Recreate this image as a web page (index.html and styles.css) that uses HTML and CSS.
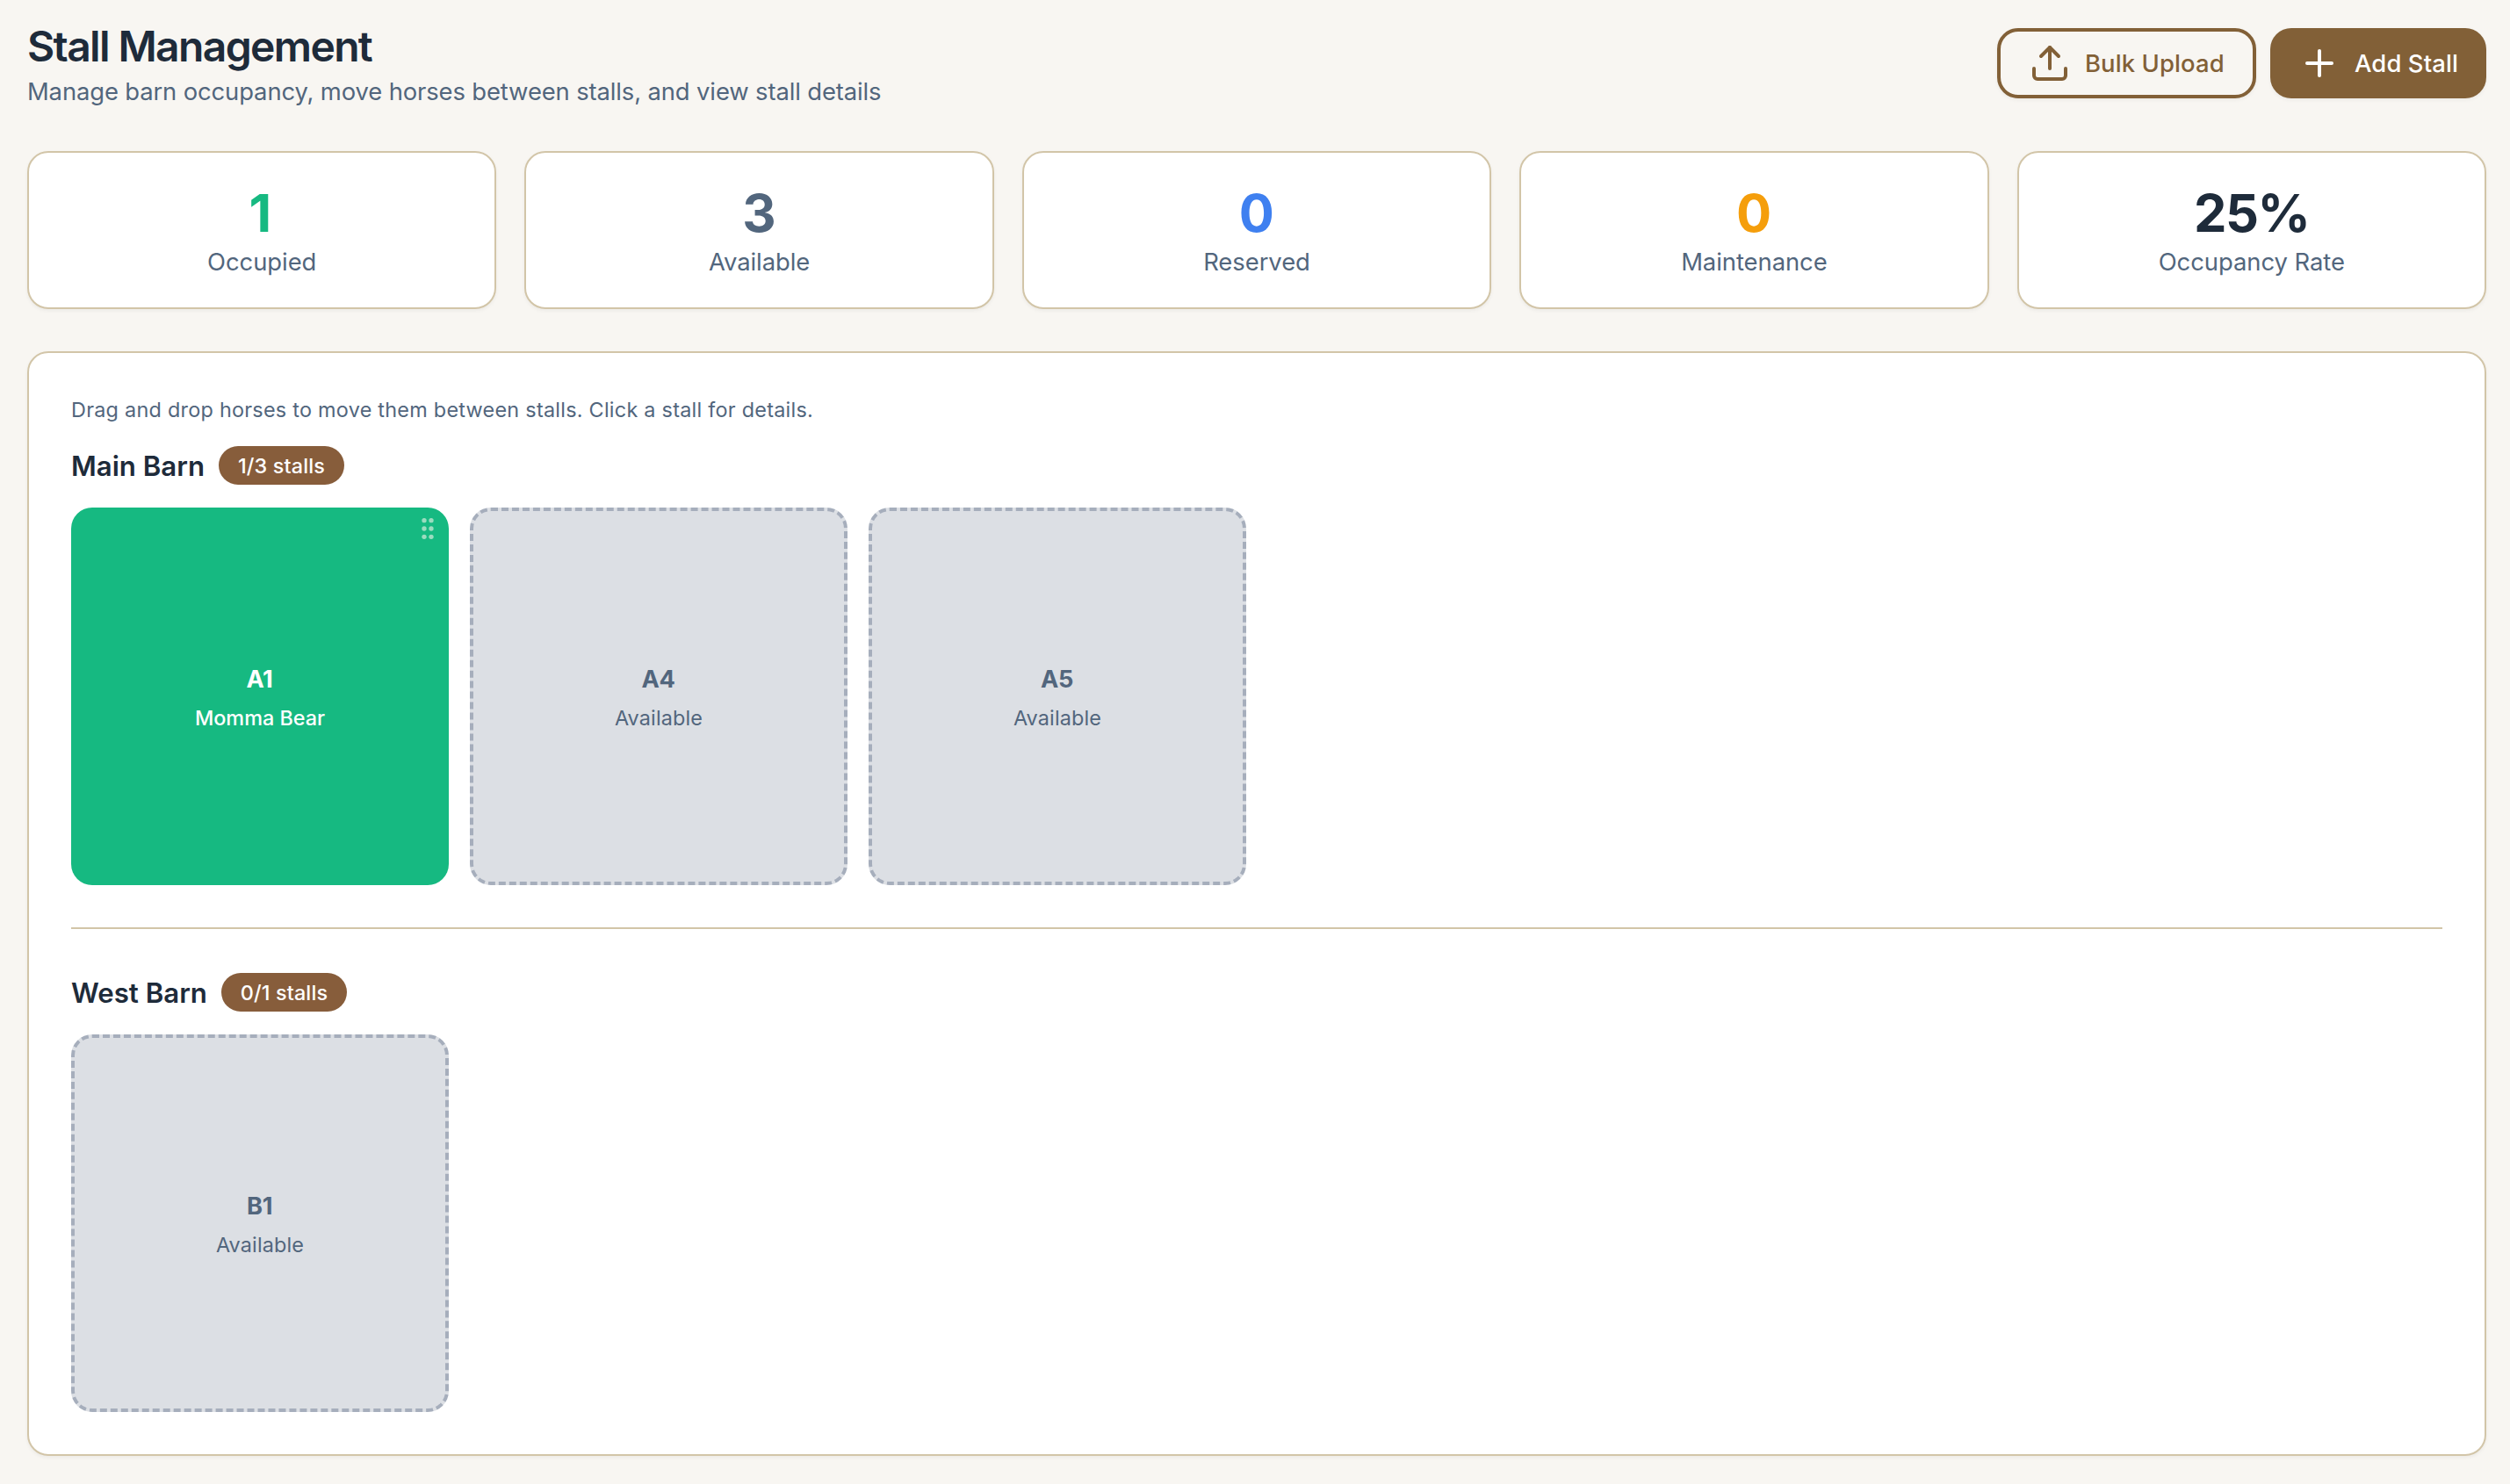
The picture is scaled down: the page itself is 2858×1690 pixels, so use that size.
FILE: index.html
```
<!DOCTYPE html>
<html lang="en">
<head>
<meta charset="utf-8">
<title>Stall Management</title>
<link rel="stylesheet" href="styles.css">
</head>
<body>
<main class="page">
  <header class="page-header">
    <div class="heading">
      <h1 class="title">Stall Management</h1>
      <p class="subtitle">Manage barn occupancy, move horses between stalls, and view stall details</p>
    </div>
    <div class="actions">
      <button class="btn btn-outline" type="button">
        <svg class="btn-icon" viewBox="0 0 24 24" aria-hidden="true"><path d="M21 15v4a2 2 0 0 1-2 2H5a2 2 0 0 1-2-2v-4"/><path d="M17 8l-5-5-5 5"/><path d="M12 3v12"/></svg>
        <span>Bulk Upload</span>
      </button>
      <button class="btn btn-solid" type="button">
        <svg class="btn-icon" viewBox="0 0 24 24" aria-hidden="true"><path d="M5 12h14"/><path d="M12 5v14"/></svg>
        <span>Add Stall</span>
      </button>
    </div>
  </header>

  <section class="stats">
    <div class="stat"><div class="stat-value is-green">1</div><div class="stat-label">Occupied</div></div>
    <div class="stat"><div class="stat-value is-slate">3</div><div class="stat-label">Available</div></div>
    <div class="stat"><div class="stat-value is-blue">0</div><div class="stat-label">Reserved</div></div>
    <div class="stat"><div class="stat-value is-orange">0</div><div class="stat-label">Maintenance</div></div>
    <div class="stat"><div class="stat-value is-rate">25%</div><div class="stat-label">Occupancy Rate</div></div>
  </section>

  <section class="panel">
    <p class="hint">Drag and drop horses to move them between stalls. Click a stall for details.</p>
    <div class="barn">
      <div class="barn-header"><h2 class="barn-name">Main Barn</h2><span class="badge">1/3 stalls</span></div>
      <div class="stalls">
        <div class="stall is-occupied">
          <svg class="grip" viewBox="0 0 24 24" aria-hidden="true"><circle cx="9" cy="5" r="2"/><circle cx="9" cy="12" r="2"/><circle cx="9" cy="19" r="2"/><circle cx="15" cy="5" r="2"/><circle cx="15" cy="12" r="2"/><circle cx="15" cy="19" r="2"/></svg>
          <div class="stall-name">A1</div><div class="stall-status">Momma Bear</div>
        </div>
        <div class="stall"><div class="stall-name">A4</div><div class="stall-status">Available</div></div>
        <div class="stall"><div class="stall-name">A5</div><div class="stall-status">Available</div></div>
      </div>
    </div>
    <div class="barn barn-next">
      <div class="barn-header"><h2 class="barn-name">West Barn</h2><span class="badge">0/1 stalls</span></div>
      <div class="stalls">
        <div class="stall"><div class="stall-name">B1</div><div class="stall-status">Available</div></div>
      </div>
    </div>
  </section>
</main>
</body>
</html>
```

FILE: styles.css
```
:root {
  --page: #f8f6f2;
  --ink: #1e2b3a;
  --slate: #52667d;
  --sand: #d2c5a8;
  --brown: #826037;
}

* { box-sizing: border-box; }

body {
  margin: 0;
  background: var(--page);
  color: var(--ink);
  font-family: Inter, "Liberation Sans", sans-serif;
}

h1, h2, p { margin: 0; }

.page { padding: 22px 27px 32px 31px; min-height: 1690px; }

.page-header {
  display: flex;
  justify-content: space-between;
  align-items: flex-start;
}

.title {
  padding-top: 2px;
  font-size: 48px;
  font-weight: 600;
  line-height: 58px;
  letter-spacing: -1.63px;
}

.subtitle {
  font-size: 27.4px;
  line-height: 44px;
  letter-spacing: -0.12px;
  color: var(--slate);
}

.actions { display: flex; gap: 16px; margin-top: 10px; }

.btn {
  display: flex;
  align-items: center;
  gap: 16px;
  height: 80px;
  padding: 0 32px;
  border: 0;
  border-radius: 24px;
  font: 500 27.4px/40px Inter, "Liberation Sans", sans-serif;
  letter-spacing: 0.12px;
  white-space: nowrap;
  box-shadow: 0 2px 4px rgba(0, 0, 0, 0.05);
}

.btn-outline {
  width: 295px;
  padding: 0 28px 0 32px;
  border: 4px solid var(--brown);
  background: var(--page);
  color: var(--brown);
}

.btn-solid { width: 246px; background: var(--brown); color: #fff; }

.btn-icon {
  flex: none;
  width: 48px;
  height: 48px;
  fill: none;
  stroke: currentColor;
  stroke-width: 2;
  stroke-linecap: round;
  stroke-linejoin: round;
}

.stats {
  display: grid;
  grid-template-columns: repeat(5, 1fr);
  gap: 32px;
  margin-top: 46px;
}

.stat, .panel {
  background: #fff;
  border: 2px solid var(--sand);
  border-radius: 24px;
  box-shadow: 0 2px 4px rgba(0, 0, 0, 0.05);
}

.stat { padding: 32px; text-align: center; }

.stat-value {
  padding-right: 2px;
  font-size: 59.5px;
  font-weight: 700;
  line-height: 72px;
  letter-spacing: -1.5px;
}

.stat-label {
  font-size: 27.4px;
  line-height: 40px;
  letter-spacing: -0.04px;
  color: var(--slate);
}

.is-green { padding-right: 5px; color: #16b981; }
.is-slate { color: var(--slate); }
.is-blue { color: #3f80f0; }
.is-orange { color: #f59e0b; }
.is-rate { padding-right: 0; }

.panel { margin-top: 48px; padding: 48px; }

.hint {
  padding-top: 1px;
  font-size: 23.4px;
  line-height: 32px;
  letter-spacing: 0.26px;
  color: var(--slate);
}

.barn { margin-top: 25px; }

.barn-next {
  margin-top: 48px;
  padding-top: 50px;
  border-top: 2px solid var(--sand);
}

.barn-header { display: flex; align-items: center; gap: 16px; height: 44px; }

.barn-name {
  padding-top: 2px;
  font-size: 31.2px;
  font-weight: 600;
  line-height: 44px;
}

.badge {
  width: 143px;
  height: 44px;
  padding-top: 1px;
  border-radius: 22px;
  background: #875d3b;
  color: #fff;
  font-size: 23.4px;
  font-weight: 500;
  line-height: 43px;
  letter-spacing: 0.15px;
  text-align: center;
}

.stalls {
  display: grid;
  grid-template-columns: repeat(6, 1fr);
  gap: 24px;
  margin-top: 26px;
}

.stall {
  position: relative;
  display: flex;
  flex-direction: column;
  align-items: center;
  justify-content: center;
  gap: 4px;
  padding-top: 2px;
  aspect-ratio: 1;
  border: 4px dashed #a6aebc;
  border-radius: 24px;
  background: #dcdfe4;
  color: var(--slate);
}

.stall.is-occupied { border: 0; background: #16b981; color: #fff; }

.stall-name {
  padding-right: 1px;
  font-size: 27.2px;
  font-weight: 700;
  line-height: 44px;
  letter-spacing: -0.3px;
}

.stall-status { font-size: 23.4px; line-height: 36px; letter-spacing: 0.15px; }

.is-occupied .stall-status { font-weight: 500; letter-spacing: 0; }

.grip {
  position: absolute;
  top: 8px;
  right: 8px;
  width: 32px;
  height: 32px;
  fill: #9bdcbf;
}
```
